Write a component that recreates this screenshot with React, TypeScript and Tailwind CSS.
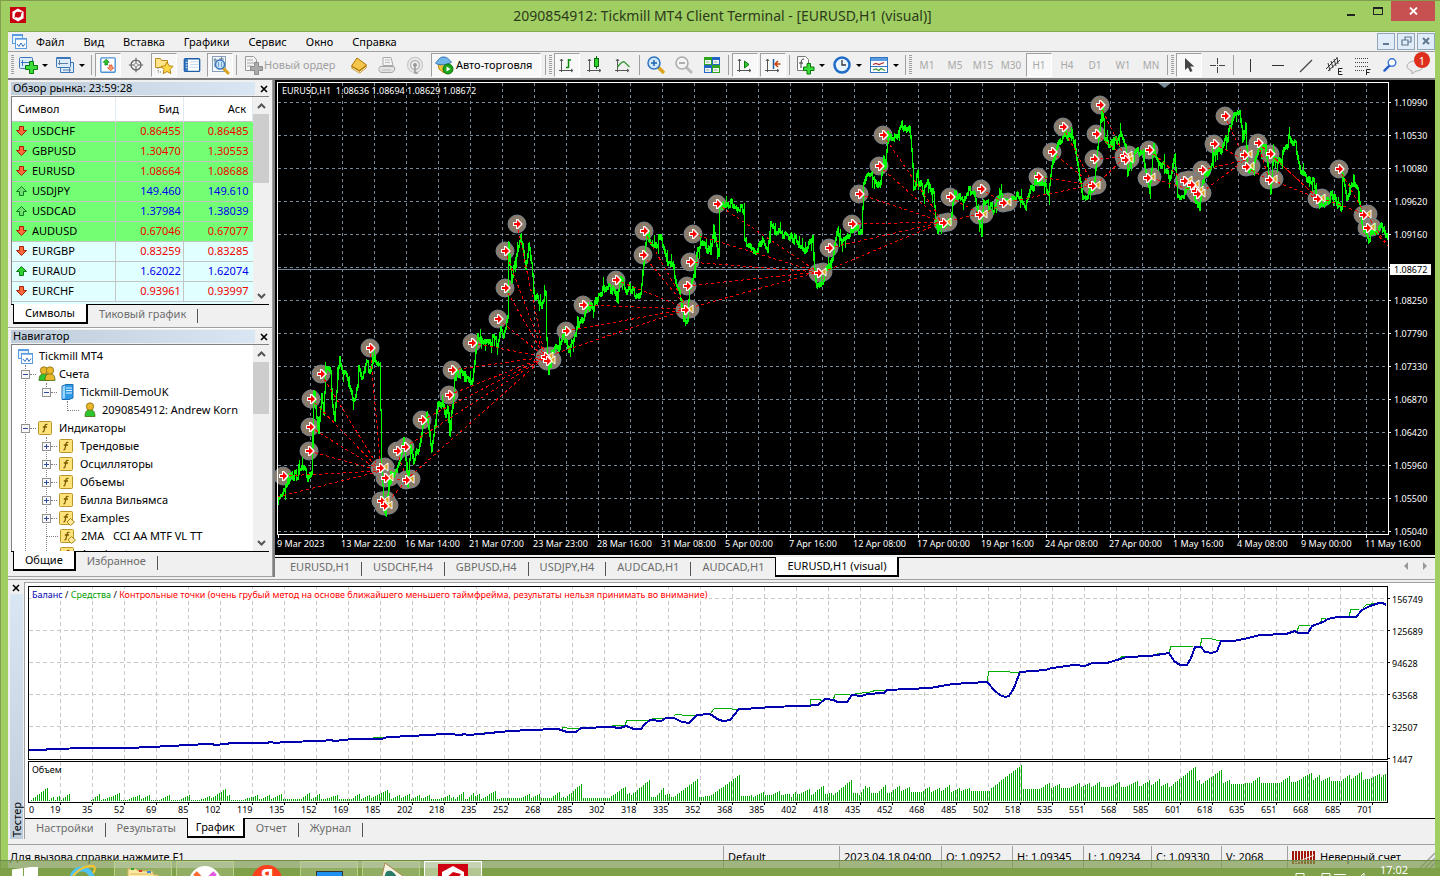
import React from "react";

type Pt = [number, number];

/* ---------- data ---------- */

const quotes: [string, string, string, boolean, boolean][] = [
  ["USDCHF", "0.86455", "0.86485", false, true],
  ["GBPUSD", "1.30470", "1.30553", false, true],
  ["EURUSD", "1.08664", "1.08688", false, true],
  ["USDJPY", "149.460", "149.610", true, true],
  ["USDCAD", "1.37984", "1.38039", true, true],
  ["AUDUSD", "0.67046", "0.67077", false, true],
  ["EURGBP", "0.83259", "0.83285", false, false],
  ["EURAUD", "1.62022", "1.62074", true, false],
  ["EURCHF", "0.93961", "0.93997", false, false],
];

const price: Pt[] = [
  [277, 499], [282, 496], [285, 484], [288, 481], [292, 474], [297, 476], [301, 466], [305, 471], [307, 478], [311, 473],
  [312, 443], [313, 396], [315, 406], [318, 433], [321, 393], [323, 413], [325, 369], [330, 371], [332, 409], [334, 421],
  [337, 376], [339, 360], [342, 371], [345, 373], [348, 386], [353, 399], [357, 386], [358, 366], [362, 379], [365, 363],
  [369, 369], [373, 356], [376, 366], [379, 366], [380, 409], [381, 469], [383, 509], [385, 514], [387, 493], [390, 473],
  [393, 479], [397, 466], [400, 459], [403, 441], [405, 459], [407, 487], [410, 446], [413, 463], [415, 451], [418, 453],
  [422, 429], [426, 416], [428, 429], [431, 447], [434, 429], [437, 406], [442, 403], [445, 413], [447, 406], [449, 434],
  [452, 403], [455, 373], [460, 374], [467, 378], [472, 383], [474, 363], [477, 333], [480, 339], [485, 343], [492, 339],
  [497, 343], [500, 326], [503, 333], [507, 319], [508, 243], [511, 283], [513, 266], [517, 249], [520, 233], [523, 253],
  [525, 266], [528, 246], [531, 259], [533, 293], [537, 296], [541, 303], [545, 294], [546, 336], [548, 373], [551, 353],
  [555, 349], [558, 349], [562, 336], [565, 339], [568, 352], [573, 336], [578, 326], [583, 316], [588, 306], [593, 309],
  [598, 293], [605, 286], [613, 289], [617, 299], [620, 274], [625, 296], [629, 288], [636, 294], [640, 293], [643, 266],
  [646, 236], [650, 246], [657, 243], [658, 235], [663, 246], [667, 263], [671, 263], [675, 279], [679, 293], [681, 309],
  [685, 321], [687, 316], [689, 289], [693, 273], [697, 249], [702, 243], [710, 255], [713, 226], [718, 252], [719, 203],
  [723, 209], [730, 204], [737, 208], [743, 209], [744, 243], [750, 243], [756, 253], [762, 239], [767, 249], [770, 224],
  [775, 233], [788, 234], [797, 243], [805, 249], [812, 236], [814, 269], [816, 288], [822, 281], [827, 266], [832, 256],
  [837, 229], [842, 243], [848, 233], [853, 226], [861, 231], [863, 183], [867, 176], [873, 176], [879, 186], [883, 156],
  [885, 166], [887, 129], [891, 139], [897, 139], [901, 123], [906, 131], [909, 126], [912, 166], [913, 189], [917, 176],
  [923, 192], [928, 183], [933, 193], [935, 219], [937, 234], [940, 226], [945, 229], [950, 219], [954, 193], [960, 199],
  [967, 193], [973, 191], [978, 216], [981, 225], [983, 203], [993, 208], [1000, 196], [1006, 203], [1010, 199], [1018, 196],
  [1025, 209], [1030, 189], [1038, 179], [1042, 183], [1048, 192], [1051, 163], [1057, 146], [1065, 133], [1072, 139],
  [1077, 163], [1081, 193], [1086, 196], [1093, 189], [1097, 149], [1102, 109], [1104, 139], [1108, 148], [1115, 141],
  [1120, 131], [1125, 143], [1127, 171], [1132, 159], [1137, 151], [1143, 156], [1147, 183], [1149, 192], [1153, 146],
  [1156, 159], [1163, 168], [1170, 176], [1174, 156], [1177, 193], [1183, 196], [1190, 183], [1195, 199], [1199, 211],
  [1202, 179], [1207, 173], [1213, 156], [1222, 146], [1227, 136], [1233, 116], [1239, 113], [1243, 139], [1245, 126],
  [1247, 169], [1252, 166], [1258, 149], [1264, 143], [1270, 189], [1273, 156], [1280, 161], [1288, 139], [1295, 146],
  [1300, 169], [1307, 179], [1313, 183], [1319, 207], [1325, 203], [1333, 193], [1338, 209], [1341, 206], [1342, 173],
  [1346, 196], [1353, 183], [1358, 193], [1361, 223], [1367, 239], [1373, 233], [1383, 226], [1387, 239],
];

const entries: Pt[] = [
  [283, 476], [309, 451], [310, 427], [311, 399], [321, 374], [370, 348], [397, 451], [405, 447], [422, 420], [449, 395],
  [452, 370], [472, 343], [498, 319], [505, 288], [505, 251], [517, 224], [566, 331], [583, 305], [616, 280], [643, 255],
  [644, 231], [687, 286], [690, 262], [693, 234], [717, 204], [829, 248], [852, 224], [859, 194], [879, 166], [883, 135],
  [950, 197], [981, 189], [1038, 177], [1052, 152], [1063, 127], [1094, 159], [1096, 134], [1100, 105], [1149, 150],
  [1202, 170], [1214, 144], [1225, 116], [1258, 143], [1270, 154], [1339, 169],
];

const exits: Pt[] = [
  [380, 468], [385, 478], [381, 501], [384, 506], [406, 480], [545, 357], [547, 361], [685, 310], [818, 273], [943, 223],
  [979, 215], [1003, 203], [1092, 186], [1124, 156], [1125, 160], [1147, 178], [1184, 181], [1191, 185], [1195, 191],
  [1197, 194], [1244, 155], [1246, 167], [1269, 180], [1317, 199], [1363, 215], [1367, 228],
];

const trades: [Pt, Pt[]][] = [
  [[381, 471], [[277, 497], [283, 476], [309, 451], [310, 427], [311, 399], [321, 374], [370, 348]]],
  [[407, 480], [[385, 478], [384, 506], [397, 451]]],
  [[545, 357], [[406, 480], [405, 447], [422, 420], [449, 395], [452, 370], [472, 343], [498, 319], [505, 288], [505, 251], [517, 224]]],
  [[688, 309], [[545, 357], [566, 331], [583, 305], [616, 280], [643, 255], [644, 231]]],
  [[818, 272], [[690, 308], [687, 286], [689, 262], [693, 234], [717, 204]]],
  [[943, 222], [[823, 272], [829, 248], [852, 224], [859, 194], [879, 166], [883, 135]]],
  [[980, 214], [[950, 197], [948, 221]]],
  [[1005, 203], [[981, 189], [983, 214]]],
  [[1093, 185], [[1008, 202], [1038, 177], [1052, 152], [1063, 127]]],
  [[1125, 157], [[1096, 134], [1100, 105], [1094, 159], [1096, 185]]],
  [[1196, 191], [[1151, 178], [1149, 150]]],
  [[1245, 160], [[1202, 192], [1202, 170], [1214, 144], [1225, 116]]],
  [[1269, 180], [[1246, 167], [1258, 143]]],
  [[1319, 199], [[1272, 180], [1270, 154], [1258, 143]]],
  [[1365, 214], [[1321, 198], [1339, 169]]],
  [[1388, 246], [[1367, 215], [1371, 228]]],
];

const balance: Pt[] = [
  [29, 750], [45, 750], [48, 749], [92, 748], [129, 748], [170, 746], [207, 744], [211, 744], [216, 745], [225, 744],
  [232, 743], [266, 743], [271, 742], [275, 743], [285, 742], [321, 741], [331, 740], [334, 741], [353, 739], [381, 739],
  [388, 737], [413, 736], [425, 735], [448, 734], [461, 735], [464, 734], [468, 735], [491, 733], [498, 732], [528, 730],
  [558, 729], [567, 732], [576, 732], [581, 728], [611, 727], [620, 728], [626, 726], [634, 729], [641, 729], [645, 724],
  [650, 720], [661, 721], [666, 718], [674, 718], [682, 722], [689, 723], [697, 715], [710, 714], [719, 720], [724, 721],
  [730, 720], [739, 709], [764, 708], [766, 707], [804, 706], [818, 705], [825, 699], [834, 700], [837, 702], [847, 702],
  [852, 695], [862, 696], [867, 694], [884, 693], [887, 690], [930, 688], [953, 684], [987, 682], [995, 691], [1000, 695],
  [1005, 697], [1009, 696], [1014, 688], [1020, 672], [1045, 670], [1052, 668], [1074, 665], [1085, 666], [1092, 663],
  [1107, 663], [1120, 659], [1127, 657], [1150, 656], [1169, 653], [1174, 661], [1180, 665], [1187, 665], [1191, 658],
  [1195, 647], [1201, 647], [1205, 652], [1212, 653], [1217, 651], [1221, 641], [1234, 641], [1248, 638], [1260, 635],
  [1286, 634], [1295, 631], [1298, 633], [1308, 633], [1312, 626], [1323, 622], [1328, 619], [1337, 617], [1356, 617],
  [1362, 610], [1370, 606], [1379, 603], [1383, 603], [1386, 605],
];

const equity: Pt[][] = [
  [[34, 749], [48, 749]],
  [[373, 738], [376, 737], [388, 737]],
  [[484, 732], [491, 732]],
  [[562, 729], [563, 727], [567, 728], [580, 728]],
  [[612, 726], [625, 725], [627, 720], [648, 720]],
  [[652, 719], [658, 718], [665, 718]],
  [[674, 716], [676, 714], [682, 715], [696, 715]],
  [[711, 713], [714, 709], [728, 708], [732, 709], [739, 709]],
  [[810, 705], [811, 699], [819, 699], [822, 701]],
  [[833, 700], [835, 695], [848, 694], [852, 696]],
  [[855, 694], [870, 692], [877, 690], [886, 690]],
  [[987, 682], [989, 671], [1009, 671], [1010, 672], [1019, 672]],
  [[1117, 660], [1123, 656], [1129, 656]],
  [[1157, 654], [1167, 653]],
  [[1169, 653], [1171, 646], [1193, 647]],
  [[1200, 647], [1202, 638], [1212, 639], [1220, 641]],
  [[1256, 636], [1260, 635]],
  [[1297, 631], [1299, 626], [1310, 625]],
  [[1320, 624], [1322, 618], [1326, 619]],
  [[1349, 616], [1351, 609], [1359, 609]],
  [[1363, 608], [1366, 605], [1376, 603]],
];

const volumeBase: Pt[] = [
  [29, 0], [48, 0], [49, 1], [90, 0], [110, 1], [400, 2], [600, 3], [740, 5], [800, 7], [855, 8], [950, 9], [990, 10],
  [1022, 12], [1060, 13], [1110, 14], [1160, 15], [1225, 17], [1300, 19], [1350, 20], [1386, 24],
];

const volumeRamps: [number, number, number, number][] = [
  [31, 47, 1, 13], [50, 54, 2, 5], [105, 120, 2, 8], [128, 140, 2, 6], [210, 225, 2, 12], [245, 258, 2, 6], [270, 281, 2, 7],
  [325, 337, 2, 6], [370, 387, 2, 11], [455, 463, 2, 9], [467, 474, 2, 9], [483, 495, 3, 10], [565, 581, 3, 17],
  [610, 626, 4, 15], [630, 649, 5, 21], [655, 664, 4, 14], [675, 697, 5, 22], [710, 739, 5, 26], [752, 764, 3, 10],
  [790, 795, 3, 9], [810, 824, 5, 16], [832, 852, 5, 22], [858, 866, 4, 16], [878, 886, 9, 17], [900, 910, 9, 14],
  [990, 1021, 12, 36], [1125, 1138, 14, 21], [1168, 1196, 13, 35], [1200, 1222, 16, 32], [1294, 1312, 18, 29],
  [1350, 1362, 21, 30],
];

const dateLabels = [
  "9 Mar 2023", "13 Mar 22:00", "16 Mar 14:00", "21 Mar 07:00", "23 Mar 23:00", "28 Mar 16:00", "31 Mar 08:00",
  "5 Apr 00:00", "7 Apr 16:00", "12 Apr 08:00", "17 Apr 00:00", "19 Apr 16:00", "24 Apr 08:00", "27 Apr 00:00",
  "1 May 16:00", "4 May 08:00", "9 May 00:00", "11 May 16:00",
];

const priceLabels = [
  "1.10990", "1.10530", "1.10080", "1.09620", "1.09160", "", "1.08250", "1.07790", "1.07330", "1.06870", "1.06420",
  "1.05960", "1.05500", "1.05040",
];

const tradeLabels = [
  0, 19, 35, 52, 69, 85, 102, 119, 135, 152, 169, 185, 202, 218, 235, 252, 268, 285, 302, 318, 335, 352, 368, 385, 402,
  418, 435, 452, 468, 485, 502, 518, 535, 551, 568, 585, 601, 618, 635, 651, 668, 685, 701,
];

/* ---------- geometry helpers ---------- */

const rnd = (n: number) => {
  const v = Math.sin(n * 12.9898) * 43758.5453;
  return v - Math.floor(v);
};

const at = (pts: Pt[], x: number) => {
  for (let i = 1; i < pts.length; i++) {
    if (x <= pts[i][0]) {
      const [x0, y0] = pts[i - 1];
      const [x1, y1] = pts[i];
      return y0 + ((y1 - y0) * (x - x0)) / (x1 - x0 || 1);
    }
  }
  return pts[pts.length - 1][1];
};

const poly = (pts: Pt[]) => pts.map((p) => p.join(",")).join(" ");

const quoteAt = (x: number) => at(price, x) + rnd(Math.floor(x / 2) + 70) * 8 - 4;

const priceBars = () => {
  let d = "";
  for (let x = 278; x < 1388; x++) {
    const a = quoteAt(x - 1);
    const b = quoteAt(x);
    const spike = rnd(x + 900) > 0.86 ? 7 : 0;
    const up = 1 + rnd(x) * 2 + (rnd(x + 31) > 0.5 ? spike : 0);
    const dn = 1 + rnd(x + 500) * 2 + (rnd(x + 31) > 0.5 ? 0 : spike);
    d += `M${x + 0.5} ${Math.round(Math.min(a, b) - up)}V${Math.round(Math.max(a, b) + dn)}`;
  }
  return d;
};

const volumeBars = () => {
  let d = "";
  for (let x = 31; x <= 1386; x += 2) {
    const ramp = volumeRamps.find((r) => x >= r[0] && x <= r[1]);
    const cell = Math.floor(x / 10);
    let h = at(volumeBase, x);
    if (ramp) h = ramp[2] + ((ramp[3] - ramp[2]) * (x - ramp[0])) / (ramp[1] - ramp[0]);
    else if (x > 56 && rnd(cell) > 0.45) h += ((x % 10) / 8) * (3 + rnd(cell + 7) * 3);
    h = Math.round(h);
    if (h > 0) d += `M${x} ${801 - h}h1V801h-1z`;
  }
  return d;
};

const range = (n: number) => Array.from({ length: n }, (_, i) => i);

/* ---------- charts ---------- */

function RedArrow({ x, y }: { x: number; y: number }) {
  return (
    <g>
      <path d={`M${x - 4} ${y - 2}h3v-3h2l4.500 4.500v1l-4.500 4.500h-2v-3h-3z`} fill="#fff" />
      <path d={`M${x - 3} ${y - 1}h3v-3l4 4l-4 4v-3h-3z`} fill="#f00" />
    </g>
  );
}

function PriceChart() {
  return (
    <svg className="block h-full w-full bg-black font-['Noto_Sans',sans-serif] text-[9px]" role="img" aria-label="EURUSD,H1">
      <g transform="translate(-275 -80)">
        <g stroke="#778899" strokeDasharray="3 3" shapeRendering="crispEdges">
          {range(34).map((i) => (
            <path key={i} d={`M${310.5 + i * 32} 83V534`} />
          ))}
          {range(14).map((i) => (
            <path key={i} d={`M278 ${102.5 + i * 33}H1388`} />
          ))}
        </g>
        <path d="M278 269.5H1388" stroke="#778899" shapeRendering="crispEdges" />
        <path d="M1158 83h13l-6.500 5z" fill="#778899" />
        <g fill="#8b7b6b" stroke="#77848f" strokeWidth="1">
          {entries.map(([x, y]) => (
            <circle key={`${x}-${y}`} cx={x} cy={y} r="9" />
          ))}
          {exits.map(([x, y]) => (
            <g key={`${x}-${y}`}>
              <circle cx={x} cy={y} r="9" />
              <circle cx={x + 5} cy={y - 1} r="9" />
            </g>
          ))}
        </g>
        <path d={priceBars()} stroke="#0f0" shapeRendering="crispEdges" />
        <g stroke="#f00" strokeDasharray="3 3" shapeRendering="crispEdges">
          {trades.map(([to, from]) =>
            from.map((p) => <path key={`${p}-${to}`} d={`M${p[0]} ${p[1]}L${to[0]} ${to[1]}`} />),
          )}
        </g>
        {exits.map(([x, y]) => (
          <path key={`${x}-${y}`} d={`M${x + 8} ${y - 5}v8l-5 -4z`} fill="#daa520" stroke="#fff" />
        ))}
        {[...entries, ...exits].map(([x, y]) => (
          <RedArrow key={`${x}-${y}`} x={x} y={y} />
        ))}
        <path d="M277.5 534V82.5H1388.5V534.5H277" fill="none" stroke="#fff" shapeRendering="crispEdges" />
        <g fill="#fff">
          <text x="282" y="94" xmlSpace="preserve">EURUSD,H1  1.08636 1.08694 1.08629 1.08672</text>
          {dateLabels.map((t, i) => (
            <g key={t}>
              <path d={`M${278.5 + i * 64} 534v4`} stroke="#fff" />
              <text x={277 + i * 64} y="547">{t}</text>
            </g>
          ))}
          {priceLabels.map((t, i) => (
            <g key={i}>
              <path d={`M1388 ${102.5 + i * 33}h3`} stroke="#fff" />
              <text x="1394" y={106 + i * 33}>{t}</text>
            </g>
          ))}
        </g>
        <rect x="1390" y="264" width="41" height="11" fill="#fff" />
        <text x="1394" y="273" fill="#000">1.08672</text>
      </g>
    </svg>
  );
}

function TesterChart() {
  return (
    <svg className="block h-full w-full bg-white font-['Noto_Sans',sans-serif] text-[9px]" role="img" aria-label="Баланс / Средства">
      <g transform="translate(-25 -583)">
        <g stroke="#c8c8c8" strokeDasharray="4 3" shapeRendering="crispEdges">
          {range(42).map((i) => (
            <path key={i} d={`M${60.5 + i * 32} 587V759M${60.5 + i * 32} 762V802`} />
          ))}
          {range(5).map((i) => (
            <path key={i} d={`M29 ${598.5 + i * 32}H1387`} />
          ))}
        </g>
        <path d={volumeBars()} fill="#00aa00" shapeRendering="crispEdges" />
        {equity.map((e, i) => (
          <polyline key={i} points={poly(e)} fill="none" stroke="#00b000" shapeRendering="crispEdges" />
        ))}
        <polyline points={poly(balance)} fill="none" stroke="#0000b0" strokeWidth="2" shapeRendering="crispEdges" />
        <g fill="none" stroke="#000" shapeRendering="crispEdges">
          <path d="M28.5 586.5H1387.5V759.5H28.5zM28.5 761.5H1387.5V802.5H28.5z" />
          {range(42).map((i) => (
            <path key={i} d={`M${60.5 + i * 32} 802v3`} />
          ))}
          {range(6).map((i) => (
            <path key={i} d={`M1387 ${598.5 + i * 32}h3`} />
          ))}
        </g>
        <rect x="31" y="589" width="678" height="11" fill="#fff" />
        <text x="32" y="598" fill="#000">
          <tspan fill="#0000b0">Баланс</tspan> / <tspan fill="#00a000">Средства</tspan> /{" "}
          <tspan fill="#f00">
            Контрольные точки (очень грубый метод на основе ближайшего меньшего таймфрейма, результаты нельзя принимать во внимание)
          </tspan>
        </text>
        <text x="32" y="773">Объем</text>
        {["156749", "125689", "94628", "63568", "32507", "1447"].map((t, i) => (
          <text key={t} x="1392" y={603 + i * 32}>{t}</text>
        ))}
        {tradeLabels.map((t, i) => (
          <text key={t} x={i === 0 ? 29 : (i < 6 ? 18 : 13) + i * 32} y="813">
            {t}
          </text>
        ))}
      </g>
    </svg>
  );
}

/* ---------- icons ---------- */

function Icon({ children, size = 20 }: { children: React.ReactNode; size?: 16 | 18 | 20 }) {
  return (
    <svg width={size} height={size} viewBox="0 0 20 20" fill="none" aria-hidden="true" className="shrink-0">
      {children}
    </svg>
  );
}

const GreenPlus = () => (
  <path d="M12 8.500h3.500v3.500h3.500v3.500h-3.500v3.500h-3.500v-3.500H8.500v-3.500h3.500z" fill="#3ddc3d" stroke="#067a06" />
);
const Axes = () => <path d="M4.500 4v13M2 15.500h14M3 6l1.500-2L6 6M14 14l2 1.500l-2 1.500" stroke="#555" />;

const icons = {
  newChart: (
    <Icon>
      <rect x="1.500" y="2.500" width="13" height="11" rx="1" fill="#dcecfb" stroke="#3a76b8" />
      <path d="M4.500 5v6M3 7.500h8" stroke="#3a76b8" />
      <path d="M11.500 6.500h4v4h4v4h-4v4h-4v-4h-4v-4h4z" fill="#3ddc3d" stroke="#067a06" />
    </Icon>
  ),
  profiles: (
    <Icon>
      <path d="M5.500 7.500h13v10h-13z" fill="#dcecfb" stroke="#3a76b8" />
      <rect x="1.500" y="2.500" width="14" height="10" rx="1" fill="#dcecfb" stroke="#3a76b8" />
      <path d="M1.500 3h14" stroke="#3a76b8" strokeWidth="2" />
      <path d="M4.500 5v5M3 8.500h10M8 15h8M14.500 13v4" stroke="#5f7f9f" />
    </Icon>
  ),
  marketWatch: (
    <Icon size={18}>
      <rect x="2" y="2" width="16" height="16" rx="1" fill="#fff" stroke="#4a90d8" strokeWidth="1.500" />
      <path d="M8 3.500L11.500 7H9.500v3h-3V7h-2z" fill="#2dc52d" stroke="#0a7a0a" strokeWidth=".7" />
      <path d="M13 16.500L9.500 13h2v-3h3v3h2z" fill="#ffa070" stroke="#c53010" strokeWidth=".7" />
    </Icon>
  ),
  dataWindow: (
    <Icon size={18}>
      <circle cx="10" cy="10" r="5.500" stroke="#666" strokeWidth="1.500" />
      <path d="M10 2v16M2 10h16" stroke="#666" strokeWidth="1.300" />
      <circle cx="10" cy="10" r="2" fill="#eee" stroke="#999" />
    </Icon>
  ),
  navigator: (
    <Icon>
      <path d="M1.500 3.500h5l1 2h6v7h-12z" fill="#ffe48a" stroke="#b8902a" />
      <path d="M4 13v4h4" stroke="#777" strokeDasharray="1 1" />
      <path d="M13 7l2 3.800l4 .6l-3 3l.8 4.200L13 16.500l-3.800 2.100L10 14.400l-3-3l4-.6z" fill="#ffd84a" stroke="#b8860b" />
    </Icon>
  ),
  terminal: (
    <Icon size={18}>
      <rect x="1.500" y="3" width="17" height="14" rx="1" fill="#fff" stroke="#1f5fa8" strokeWidth="1.500" />
      <path d="M2 3.500h3.500v13H2z" fill="#2f74c0" />
      <path d="M8 6.500h9M8 9.500h9M8 12.500h9" stroke="#bcd3ea" />
      <path d="M3 7h2M3 10h2M3 13h2" stroke="#fff" />
    </Icon>
  ),
  tester: (
    <Icon>
      <rect x="2.500" y="1.500" width="13" height="15" fill="#f4f8fc" stroke="#889fb8" />
      <path d="M5 3v9M3.500 5h4M11.500 2v4M9 4h5" stroke="#668099" />
      <path d="M13 13l5 5" stroke="#d9a520" strokeWidth="3" strokeLinecap="round" />
      <circle cx="10" cy="9.500" r="4.500" fill="#bfe0fb" fillOpacity=".85" stroke="#3a76b8" strokeWidth="1.500" />
      <path d="M8.500 7v5M11.500 7v5" stroke="#6aa0d0" />
    </Icon>
  ),
  newOrder: (
    <Icon>
      <path d="M2.500 1.500h8l3 3v11h-11z" fill="#f4f4f4" stroke="#999" />
      <path d="M4 5h6M4 8h8M4 11h5" stroke="#aaa" />
      <path d="M11.500 7.500h4v4h4v4h-4v4h-4v-4h-4v-4h4z" fill="#aaa" stroke="#8c8c8c" />
    </Icon>
  ),
  metaEditor: (
    <Icon>
      <path d="M2.500 11L8 3l9.500 7v3l-7 5.500l-8-5z" fill="#b87c10" />
      <path d="M2.500 11L8 3l9.500 7l-7 5.500z" fill="#f5c64c" stroke="#b07908" />
      <path d="M3.500 13l7 4.300l6.500-5" stroke="#fff2c0" />
    </Icon>
  ),
  options: (
    <Icon>
      <path d="M6 2.500h8l2 8H6z" fill="#f4f4f4" stroke="#aaa" />
      <path d="M8 5h5M8 7.500h5" stroke="#bbb" />
      <path d="M3 11.500h14c2 4-1 6-3 6H5c-3 0-4-3-2-6z" fill="#e4e4e4" stroke="#a4a4a4" />
      <path d="M5 15h9" stroke="#bbb" />
    </Icon>
  ),
  signals: (
    <Icon>
      <circle cx="10" cy="10" r="7.500" stroke="#ccc" strokeWidth="1.500" />
      <circle cx="10" cy="10" r="4.500" stroke="#b4b4b4" strokeWidth="1.500" />
      <circle cx="10" cy="10" r="2" fill="#999" />
      <path d="M10 11v7h3" stroke="#999" strokeWidth="1.500" />
    </Icon>
  ),
  autoTrading: (
    <Icon>
      <path d="M4 8h11l1 6l-6 4l-5-4z" fill="#f5c43c" stroke="#b8860b" />
      <path d="M1.500 8c2-1 3-6 8-6s6 4 8 5c-3 3-13 4-16 1z" fill="#6fb5e8" stroke="#2f74b0" />
      <circle cx="14" cy="14" r="5" fill="#1da51d" stroke="#0a760a" />
      <path d="M12.500 11.500v5l4-2.500z" fill="#fff" />
    </Icon>
  ),
  bars: (
    <Icon>
      <Axes />
      <path d="M11.500 4v9M11.500 5h2.500M9 12.500h2.500" stroke="#0a8a0a" strokeWidth="1.500" />
    </Icon>
  ),
  candles: (
    <Icon>
      <Axes />
      <path d="M11.500 1v13" stroke="#0a6a0a" />
      <rect x="9.500" y="3.500" width="4" height="8" fill="#2fd12f" stroke="#0a6a0a" />
    </Icon>
  ),
  line: (
    <Icon>
      <Axes />
      <path d="M4.500 12c3-4 6-7 8-4l4 4" stroke="#3a9a3a" strokeWidth="1.300" />
    </Icon>
  ),
  zoomIn: (
    <Icon>
      <path d="M12 12l6 6" stroke="#d9a520" strokeWidth="3.500" />
      <circle cx="8" cy="8" r="6" fill="#cfe8fb" stroke="#2f74c0" strokeWidth="1.500" />
      <path d="M8 5v6M5 8h6" stroke="#1f64b0" strokeWidth="1.500" />
    </Icon>
  ),
  zoomOut: (
    <Icon>
      <path d="M12 12l6 6" stroke="#bbb" strokeWidth="3" />
      <circle cx="8" cy="8" r="6" fill="#f4f4f4" stroke="#aaa" strokeWidth="1.500" />
      <path d="M5 8h6" stroke="#999" strokeWidth="1.500" />
    </Icon>
  ),
  tile: (
    <Icon>
      <path d="M2 2h8v8H2zM10 10h8v8h-8z" fill="#2fa51d" />
      <path d="M10 2h8v8h-8zM2 10h8v8H2z" fill="#2463c8" />
      <path d="M3 5h6v4H3zM11 5h6v4h-6zM3 13h6v4H3zM11 13h6v4h-6z" fill="#eef6ec" />
      <path d="M4 7h3M12 7h3M4 15h3M12 15h3" stroke="#9ab" />
    </Icon>
  ),
  autoScroll: (
    <Icon>
      <Axes />
      <path d="M9.500 6v7l4.500-3.500z" fill="#2fc52f" stroke="#0a7a0a" />
    </Icon>
  ),
  chartShift: (
    <Icon>
      <Axes />
      <path d="M10.500 4v10" stroke="#1f5fa8" strokeWidth="1.500" />
      <path d="M17.500 9h-5M15 6l-3 3l3 3" stroke="#c8400a" strokeWidth="1.500" />
    </Icon>
  ),
  indicators: (
    <Icon>
      <path d="M2.500 1.500h8l3 3v11h-11z" fill="#fff" stroke="#777" />
      <path d="M9 4c-3 0-3 2-3 9M4 8h4" stroke="#333" />
      <GreenPlus />
    </Icon>
  ),
  periods: (
    <Icon>
      <circle cx="10" cy="10" r="7.500" fill="#eaf4ff" stroke="#1f6cc8" strokeWidth="2.500" />
      <path d="M10 5v5h4" stroke="#333" strokeWidth="1.300" />
    </Icon>
  ),
  templates: (
    <Icon>
      <rect x="1.500" y="2.500" width="17" height="15" fill="#fff" stroke="#2f74c0" />
      <path d="M2 3h16v3H2z" fill="#5b9be0" />
      <path d="M2 11.500h16" stroke="#2f74c0" />
      <path d="M4 9.500l3-1l3 1l5-2" stroke="#b03030" strokeWidth="1.300" />
      <path d="M4 15l3-1l3 1.500l2-2l4 2" stroke="#2f9a2f" strokeWidth="1.300" />
    </Icon>
  ),
  cursor: (
    <Icon>
      <path d="M6 3v12l3-2.500l2.200 4.500l2.300-1l-2.200-4.500h4z" fill="#444" />
    </Icon>
  ),
  cross: (
    <Icon>
      <path d="M10.500 3v6M10.500 12v6M3 10.500h6M12 10.500h6" stroke="#444" />
      <path d="M10 10h1v1h-1z" fill="#444" />
    </Icon>
  ),
  vline: <Icon><path d="M10.500 4v13" stroke="#333" /></Icon>,
  hline: <Icon><path d="M4 10.500h12" stroke="#333" /></Icon>,
  trend: <Icon><path d="M4 17L16 5" stroke="#444" strokeWidth="1.200" /></Icon>,
  channel: (
    <Icon>
      <path d="M2 14L13 3M4 16L16 5M4 8l2 8M7 6l2 7M10 4l2 7M13 2l1 7" stroke="#333" />
      <path d="M14.500 19.500v-6h4M14.500 16.500h3M14.500 19.500h4" stroke="#222" />
    </Icon>
  ),
  fibo: (
    <Icon>
      <path d="M3 3.500h14M3 7.500h14M3 11.500h14M3 15.500h9" stroke="#444" strokeDasharray="1 1" />
      <path d="M14.500 20v-5.500h4M14.500 17.500h3" stroke="#222" />
    </Icon>
  ),
  search: (
    <Icon size={16}>
      <path d="M9 11l-6 6" stroke="#2a5fc8" strokeWidth="3" strokeLinecap="round" />
      <circle cx="12.500" cy="7" r="4.700" fill="#fff" stroke="#3a76d8" strokeWidth="1.800" />
    </Icon>
  ),
};

function AppLogo() {
  return (
    <svg width="16" height="16" viewBox="0 0 16 16" aria-hidden="true">
      <rect width="16" height="16" fill="#c8000f" />
      <path d="M8 1.500l5.600 3.200v6.600L8 14.500l-5.600-3.200V4.700z" fill="#fff" />
      <path d="M4 11l2-1c3 2 6-1 5-3l1.500-2.500l-2 .8C7 3.500 4 6 5 9z" fill="#c8000f" />
    </svg>
  );
}

function ChartLogo() {
  return (
    <svg width="15" height="15" viewBox="0 0 15 15" fill="none" aria-hidden="true" className="shrink-0">
      <rect x=".5" y=".5" width="10" height="9" fill="#e6f1fc" stroke="#5b9be0" />
      <path d="M1 1.500h9" stroke="#5b9be0" />
      <rect x="3.500" y="4.500" width="11" height="10" fill="#fff" stroke="#5b9be0" />
      <path d="M4 5.500h10" stroke="#8dbbe8" />
      <path d="M5 10l2 2.500l2-3.500l2 3.500l2-3" stroke="#2f74c0" />
    </svg>
  );
}

const QuoteArrow = ({ up, bright }: { up: boolean; bright: boolean }) => (
  <svg width="11" height="10" viewBox="0 0 11 10" aria-hidden="true" className="shrink-0">
    {up ? (
      <path d="M5.500 .5l5 5H7.500v4h-4v-4H.5z" fill={bright ? "#2fd12f" : "#6fe06f"} stroke="#0f7a1f" />
    ) : (
      <path d="M5.500 9.500l5-5H7.500v-4h-4v4H.5z" fill="#ff6a3a" stroke="#a82408" />
    )}
  </svg>
);

const FolderF = ({ custom }: { custom?: boolean }) => (
  <svg width="17" height="15" viewBox="0 0 17 15" aria-hidden="true" className="shrink-0">
    <rect x=".5" y=".5" width="13" height="13" rx="1" fill="#ffe27a" stroke="#b8962a" />
    <path d="M9.500 3.500c-2.500-.8-2.500 1-3 4s-1 3.500-2 3.200M4.800 6h4.200" fill="none" stroke="#7a5a00" strokeWidth="1.300" />
    {custom && <path d="M11.500 7.500l4 3.500l-4 3.500l-3.500-3.500z" fill="#ffe89a" stroke="#a8861a" />}
  </svg>
);

const Person = ({ body = "#2dc52d", x = 0 }: { body?: string; x?: number }) => (
  <g transform={`translate(${x} 0)`}>
    <path d="M1 14.500c0-5 2-7 5-7s5 2 5 7z" fill={body} stroke="#4a6a10" strokeWidth=".8" />
    <circle cx="6" cy="4.500" r="3.700" fill="#e8b82a" stroke="#8a6a10" strokeWidth=".8" />
  </g>
);

/* ---------- toolbar pieces ---------- */

const Grip = () => (
  <span aria-hidden="true" className="mx-px h-5 w-[3px] shrink-0 bg-[repeating-linear-gradient(#a0a0a0_0_1px,#f0f0f0_1px_2px)]" />
);
const Sep = () => <span aria-hidden="true" className="mx-0.5 h-5 w-px shrink-0 bg-[#a0a0a0]" />;

const pressedCls = "border border-[#a0a0a0] border-r-white border-b-white bg-[#f8f8f8]";

function Tool({ label, icon, on }: { label: string; icon: React.ReactNode; on?: boolean }) {
  return (
    <button type="button" aria-label={label} aria-pressed={!!on} className="flex h-6 w-7 shrink-0 items-center justify-center">
      <span className={`flex h-6 w-[26px] items-center justify-center ${on ? pressedCls : ""}`}>{icon}</span>
    </button>
  );
}

function DropTool({ label, icon }: { label: string; icon: React.ReactNode }) {
  return (
    <button type="button" aria-label={label} className="flex h-6 w-[37px] shrink-0 items-center gap-1 pl-[3px]">
      {icon}
      <span className="border-x-[3px] border-t-[3px] border-x-transparent border-t-black" />
    </button>
  );
}

function Toolbar() {
  return (
    <div className="flex h-[29px] shrink-0 items-center border-t border-[#a0a0a0] border-b-2 border-b-[#808080] bg-[#f0f0f0] pl-0.5">
      <Grip />
      <DropTool label="Новый график" icon={icons.newChart} />
      <DropTool label="Профили" icon={icons.profiles} />
      <Sep />
      <Tool label="Обзор рынка" icon={icons.marketWatch} on />
      <Tool label="Окно данных" icon={icons.dataWindow} />
      <Tool label="Навигатор" icon={icons.navigator} on />
      <Tool label="Терминал" icon={icons.terminal} />
      <Tool label="Тестер стратегий" icon={icons.tester} on />
      <Sep />
      <button type="button" disabled className="flex h-6 w-[106px] shrink-0 items-center gap-px whitespace-nowrap pl-1 text-[#a0a0a0]">
        {icons.newOrder}
        Новый ордер
      </button>
      <Tool label="MetaEditor" icon={icons.metaEditor} />
      <Tool label="Настройки" icon={icons.options} />
      <Tool label="Сигналы" icon={icons.signals} />
      <button type="button" aria-pressed="true" className={`mx-0.5 flex h-6 w-[110px] shrink-0 items-center gap-0.5 whitespace-nowrap pl-0.5 ${pressedCls}`}>
        {icons.autoTrading}
        Авто-торговля
      </button>
      <Sep />
      <Grip />
      <Tool label="Бары" icon={icons.bars} on />
      <Tool label="Японские свечи" icon={icons.candles} />
      <Tool label="Линия" icon={icons.line} />
      <Sep />
      <Tool label="Увеличить" icon={icons.zoomIn} />
      <Tool label="Уменьшить" icon={icons.zoomOut} />
      <Tool label="Расположить окна" icon={icons.tile} />
      <Sep />
      <Tool label="Автопрокрутка" icon={icons.autoScroll} on />
      <Tool label="Сдвиг графика" icon={icons.chartShift} on />
      <Sep />
      <DropTool label="Индикаторы" icon={icons.indicators} />
      <DropTool label="Периоды" icon={icons.periods} />
      <DropTool label="Шаблоны" icon={icons.templates} />
      <Sep />
      <Grip />
      {["M1", "M5", "M15", "M30", "H1", "H4", "D1", "W1", "MN"].map((t) => (
        <button key={t} type="button" className="flex h-6 w-7 shrink-0 items-center justify-center text-[10px] text-[#a8a8a8]">
          <span className={`flex h-6 w-[26px] items-center justify-center ${t === "H1" ? pressedCls : ""}`}>{t}</span>
        </button>
      ))}
      <Sep />
      <Grip />
      <Tool label="Курсор" icon={icons.cursor} on />
      <Tool label="Перекрестие" icon={icons.cross} />
      <Sep />
      <Tool label="Вертикальная линия" icon={icons.vline} />
      <Tool label="Горизонтальная линия" icon={icons.hline} />
      <Tool label="Трендовая линия" icon={icons.trend} />
      <Tool label="Канал" icon={icons.channel} />
      <Tool label="Фибоначчи" icon={icons.fibo} />
      <Tool label="Поиск" icon={icons.search} />
      <button type="button" aria-label="Уведомления: 1" className="relative ml-0.5 flex h-6 w-7 shrink-0 items-center">
        <svg width="18" height="18" viewBox="0 0 18 18" aria-hidden="true">
          <path d="M9 5c5 0 8 2 8 5s-3 5-7 5l-4 3v-3c-3-1-5-3-5-5s3-5 8-5z" fill="#eee" stroke="#aaa" />
        </svg>
        <span className="absolute -top-px left-2 flex size-4 items-center justify-center rounded-full bg-[#dd2f1b] text-[11px] leading-none text-white">1</span>
      </button>
    </div>
  );
}

/* ---------- docked panels ---------- */

function CloseMark() {
  return (
    <svg width="8" height="8" viewBox="0 0 8 8" aria-hidden="true">
      <path d="M1 1l6 6M7 1L1 7" stroke="#000" strokeWidth="1.600" />
    </svg>
  );
}

function PanelTitle({ children }: { children: React.ReactNode }) {
  return (
    <div className="flex h-[13px] items-center gap-1">
      <h2 className="h-[13px] flex-1 bg-linear-to-r from-[#bfcddb] to-[#d9e6f3] pl-0.5 text-[11px] leading-[12px]">{children}</h2>
      <button type="button" aria-label="Закрыть" className="flex w-2.5 justify-center">
        <CloseMark />
      </button>
    </div>
  );
}

const Chevron = ({ down }: { down?: boolean }) => (
  <svg width="9" height="6" viewBox="0 0 9 6" fill="none" aria-hidden="true">
    <path d={down ? "M1 1l3.500 3.500L8 1" : "M1 5l3.500-3.500L8 5"} stroke="#555" strokeWidth="2" />
  </svg>
);

function ScrollBar({ rows }: { rows: string }) {
  return (
    <div aria-hidden="true" className="flex w-4 shrink-0 flex-col items-center bg-[#f0f0f0]">
      <div className="flex h-[17px] items-center"><Chevron /></div>
      <div className={`grid w-full flex-1 ${rows}`}>
        <div className="bg-[#cdcdcd]" />
      </div>
      <div className="flex h-[17px] items-center"><Chevron down /></div>
    </div>
  );
}

const activeTab = "-mt-px h-5 border border-t-0 border-black border-r-2 border-b-2 bg-white leading-[18px] text-black";
const TabRule = () => <span aria-hidden="true" className="mt-1 h-3.5 w-px bg-[#555]" />;

function PanelTabs({ active, idle }: { active: string; idle: string }) {
  return (
    <div className="flex h-5 shrink-0 items-start border-t border-black">
      <button type="button" className={`ml-0.5 px-[11px] ${activeTab}`}>{active}</button>
      <button type="button" className="h-[18px] px-[11px] leading-[18px] text-[#6d6d6d]">{idle}</button>
      <TabRule />
    </div>
  );
}

function MarketWatch() {
  return (
    <section className="px-[3px] pt-0.5 pb-1">
      <PanelTitle>Обзор рынка: 23:59:28</PanelTitle>
      <div className="mt-px flex h-[208px] overflow-hidden border-t border-l border-[#808080] bg-white">
        <table className="flex-1 table-fixed border-collapse self-start">
          <colgroup>
            <col className="w-[103px]" />
            <col className="w-[68px]" />
            <col className="w-[69px]" />
          </colgroup>
          <thead>
            <tr className="h-6">
              <th className="border-r border-[#e0e8f0] pl-1.5 text-left font-normal">Символ</th>
              <th className="border-r border-[#e0e8f0] pr-1 text-right font-normal">Бид</th>
              <th className="border-r border-[#e0e8f0] pr-1.5 text-right font-normal">Аск</th>
            </tr>
          </thead>
          <tbody>
            {quotes.map(([s, b, a, up, hot]) => (
              <tr key={s} className={`h-5 border-t border-[#c4c4c4] ${hot ? "bg-[#73ff73]" : "bg-[#e0ffff]"}`}>
                <td className="border-r border-[#c4c4c4] p-0 pl-1">
                  <span className="flex items-center gap-[5px] leading-[18px]">
                    <QuoteArrow up={up} bright={!hot} />
                    {s}
                  </span>
                </td>
                <td className={`border-r border-[#c4c4c4] p-0 pr-0.5 text-right leading-[18px] ${up ? "text-[#0000f0]" : "text-[#f00000]"}`}>{b}</td>
                <td className={`p-0 pr-1 text-right leading-[18px] ${up ? "text-[#0000f0]" : "text-[#f00000]"}`}>{a}</td>
              </tr>
            ))}
            <tr className="h-5 border-t border-[#c4c4c4] bg-[#e0ffff]">
              <td colSpan={3} />
            </tr>
          </tbody>
        </table>
        <ScrollBar rows="grid-rows-[2fr_3fr]" />
      </div>
      <PanelTabs active="Символы" idle="Тиковый график" />
    </section>
  );
}

const Dots = () => <span aria-hidden="true" className="w-1.5 shrink-0 border-t border-dotted border-[#808080]" />;
const Toggle = ({ open }: { open?: boolean }) => (
  <svg width="9" height="9" viewBox="0 0 9 9" aria-hidden="true" className="relative shrink-0">
    <rect x=".5" y=".5" width="8" height="8" fill="#f8f8f8" stroke="#919191" />
    <path d={open ? "M2 4.500h5" : "M2 4.500h5M4.500 2v5"} stroke="#2b4f9e" />
  </svg>
);

function Branch({ label, open, depth, icon, leaf }: { label: string; open?: boolean; depth: 1 | 2 | 3; icon: React.ReactNode; leaf?: boolean }) {
  const indent = depth === 1 ? "pl-[9px]" : depth === 2 ? "pl-[30px]" : "pl-[55px]";
  return (
    <li className={`flex h-[18px] items-center whitespace-nowrap ${indent}`}>
      {leaf ? (
        <span aria-hidden="true" className={`w-3 shrink-0 border-t border-dotted border-[#808080] ${depth === 3 ? "" : "ml-1"}`} />
      ) : (
        <>
          <Toggle open={open} />
          <Dots />
        </>
      )}
      <span className="ml-px flex w-[19px] shrink-0 justify-center">{icon}</span>
      <span className="ml-[3px] whitespace-pre">{label}</span>
    </li>
  );
}

function Navigator() {
  return (
    <section className="flex min-h-0 flex-1 flex-col border-t border-white px-[3px] pt-px pb-[5px] shadow-[0_-1px_#a0a0a0]">
      <PanelTitle>Навигатор</PanelTitle>
      <div className="mt-px flex min-h-0 flex-1 overflow-hidden border-t border-l border-[#808080] bg-white">
        <ul className="relative min-w-0 flex-1 overflow-hidden pt-0.5">
          <span aria-hidden="true" className="absolute top-5 bottom-0 left-[13px] border-l border-dotted border-[#808080]" />
          <span aria-hidden="true" className="absolute top-[38px] left-[34px] h-2 border-l border-dotted border-[#808080]" />
          <span aria-hidden="true" className="absolute top-[56px] left-[55px] h-2 border-l border-dotted border-[#808080]" />
          <span aria-hidden="true" className="absolute top-[92px] bottom-0 left-[34px] border-l border-dotted border-[#808080]" />
          <li className="flex h-[18px] items-center gap-1.5 pl-1.5">
            <ChartLogo />
            Tickmill MT4
          </li>
          <Branch label="Счета" open depth={1} icon={<svg width="18" height="16" viewBox="0 0 18 16" aria-hidden="true"><Person /><Person body="#e8b82a" x={6} /></svg>} />
          <Branch
            label="Tickmill-DemoUK"
            open
            depth={2}
            icon={
              <svg width="13" height="16" viewBox="0 0 13 16" aria-hidden="true">
                <path d="M1 2l4-1.500h7V14l-4 1.500H1z" fill="#2f9be8" stroke="#1a6ab0" />
                <path d="M5 4h6M5 6.500h6M5 9h6" stroke="#e0f2ff" />
                <path d="M1.500 2.500l2.500-1V14l-2.500 1z" fill="#9ad4ff" />
              </svg>
            }
          />
          <Branch label="2090854912: Andrew Korn" leaf depth={3} icon={<svg width="12" height="16" viewBox="0 0 12 16" aria-hidden="true"><Person /></svg>} />
          <Branch label="Индикаторы" open depth={1} icon={<FolderF />} />
          <Branch label="Трендовые" depth={2} icon={<FolderF />} />
          <Branch label="Осцилляторы" depth={2} icon={<FolderF />} />
          <Branch label="Объемы" depth={2} icon={<FolderF />} />
          <Branch label="Билла Вильямса" depth={2} icon={<FolderF />} />
          <Branch label="Examples" depth={2} icon={<FolderF custom />} />
          <Branch label="2MA   CCI AA MTF VL TT" leaf depth={2} icon={<FolderF custom />} />
          <Branch label="Accelerator" leaf depth={2} icon={<FolderF custom />} />
        </ul>
        <ScrollBar rows="grid-rows-[3fr_7fr]" />
      </div>
      <PanelTabs active="Общие" idle="Избранное" />
    </section>
  );
}

function ChartTabs() {
  return (
    <div className="mt-0.5 flex h-5 shrink-0 items-start border-t border-black pl-1 text-[#6d6d6d]">
      {["EURUSD,H1", "USDCHF,H4", "GBPUSD,H4", "USDJPY,H4", "AUDCAD,H1", "AUDCAD,H1"].map((t, i) => (
        <React.Fragment key={i}>
          {i > 0 && <TabRule />}
          <button type="button" className="h-[18px] px-[11px] leading-[18px]">{t}</button>
        </React.Fragment>
      ))}
      <button type="button" className={`px-[11px] ${activeTab}`}>EURUSD,H1 (visual)</button>
      <div className="ml-auto flex gap-[15px] pt-1 pr-2">
        <button type="button" aria-label="Влево" className="border-y-4 border-r-4 border-y-transparent border-r-[#999]" />
        <button type="button" aria-label="Вправо" className="border-y-4 border-l-4 border-y-transparent border-l-[#999]" />
      </div>
    </div>
  );
}

function Tester() {
  const idle = "h-[18px] px-[11px] leading-[18px]";
  return (
    <section className="flex h-[265px] shrink-0 border-t border-[#a0a0a0] bg-[#f0f0f0] pt-0.5 pb-[5px]">
      <div className="flex w-4 shrink-0 flex-col items-center">
        <button type="button" aria-label="Закрыть" className="flex h-3 items-center"><CloseMark /></button>
        <div className="flex w-[13px] flex-1 items-end justify-center bg-linear-to-b from-[#d9e6f3] to-[#bfcddb] pb-0.5">
          <h2 className="rotate-180 text-[11px] leading-[13px] [writing-mode:vertical-rl]">Тестер</h2>
        </div>
      </div>
      <div className="flex min-w-0 flex-1 flex-col border-t border-l border-[#a0a0a0]">
        <div className="min-h-0 flex-1"><TesterChart /></div>
        <div className="flex h-[21px] items-start border-t border-black text-[#6d6d6d]">
          <button type="button" className={idle}>Настройки</button>
          <TabRule />
          <button type="button" className={idle}>Результаты</button>
          <button type="button" className={`px-2 ${activeTab}`}>График</button>
          <button type="button" className={idle}>Отчет</button>
          <TabRule />
          <button type="button" className={idle}>Журнал</button>
          <TabRule />
        </div>
      </div>
    </section>
  );
}

function StatusBar() {
  const cell = "flex h-[22px] items-center border-l border-[#a0a0a0] pl-1 whitespace-nowrap";
  return (
    <footer className="flex h-[32px] shrink-0 items-start border-t border-[#a0a0a0] bg-[#f0f0f0] pt-px">
      <span className="flex h-[22px] flex-1 items-center pl-0.5">Для вызова справки нажмите F1</span>
      <span className={`${cell} w-[116px]`}>Default</span>
      <span className={`${cell} w-[102px]`}>2023.04.18 04:00</span>
      <span className={`${cell} w-[71px]`}>O: 1.09252</span>
      <span className={`${cell} w-[71px]`}>H: 1.09345</span>
      <span className={`${cell} w-[68px]`}>L: 1.09234</span>
      <span className={`${cell} w-[70px]`}>C: 1.09330</span>
      <span className={`${cell} w-[66px]`}>V: 2068</span>
      <span className={`${cell} w-[148px] gap-1`}>
        <svg width="24" height="13" viewBox="0 0 24 13" aria-hidden="true">
          {range(8).map((i) => (
            <path key={i} d={`M${i * 3 + 1} 0v13`} stroke="#a01808" strokeWidth="2" />
          ))}
          <path d="M3 12L22 4" stroke="#f0f0f0" />
        </svg>
        Неверный счет
        <svg width="16" height="18" viewBox="0 0 16 18" aria-hidden="true" className="ml-auto self-end">
          <path d="M1 18L16 3M6 18L16 8M11 18l5-5" stroke="#a0a0a0" strokeWidth="1.500" />
        </svg>
      </span>
    </footer>
  );
}

function Taskbar() {
  const box = "flex h-full w-[58px] justify-center overflow-hidden border border-b-0 border-[#b8d08a] bg-white/15 pt-1";
  return (
    <nav aria-label="Панель задач" className="absolute inset-x-0 bottom-0 mr-1 flex h-4 items-start gap-1 overflow-hidden border-t border-[#6f8c48] bg-linear-to-b from-[#7c9a50b0] from-45% to-[#7ea048] to-50%">
      <button type="button" aria-label="Пуск" className="w-[50px] pt-1.5">
        <svg width="28" height="24" viewBox="0 0 28 24" aria-hidden="true" className="ml-3">
          <path d="M0 2.500L11 1v11H0zM12 1L26-1v13H12z" fill="#fff" />
        </svg>
      </button>
      <button type="button" aria-label="Internet Explorer" className="flex w-[56px] justify-center pt-1">
        <svg width="28" height="28" viewBox="0 0 28 28" fill="none" aria-hidden="true">
          <circle cx="14" cy="14" r="10" stroke="#4fc3f2" strokeWidth="5" />
          <path d="M3 22C-1 14 12 0 25 1c3 1 2 5 0 7" stroke="#f6c52e" strokeWidth="2" />
        </svg>
      </button>
      <button type="button" aria-label="Проводник" className={box}>
        <svg width="34" height="28" viewBox="0 0 34 28" aria-hidden="true">
          <path d="M2 3h8l2 2h14l2 4h4v18H2z" fill="#fbe8a4" stroke="#d8b85a" />
          <path d="M5 3h3" stroke="#2aa52a" strokeWidth="2" />
          <path d="M13 5h3" stroke="#d83a2a" strokeWidth="2" />
          <path d="M21 6h4" stroke="#3a8ad8" strokeWidth="2" />
          <path d="M4 8h24" stroke="#d8b85a" />
        </svg>
      </button>
      <button type="button" aria-label="Xodo" className={box}>
        <svg width="32" height="32" viewBox="0 0 32 32" aria-hidden="true" className="shrink-0">
          <circle cx="16" cy="16" r="16" fill="#fff" />
          <path d="M6 7l10 10" stroke="#ff6a2a" strokeWidth="5" />
          <path d="M26 7L16 17" stroke="#e05ae0" strokeWidth="5" />
        </svg>
      </button>
      <button type="button" aria-label="Яндекс" className="flex w-[58px] justify-center pt-1">
        <span className="flex size-[30px] shrink-0 justify-center rounded-full bg-[#fc3f1d] text-[20px] leading-[22px] font-bold text-white">Я</span>
      </button>
      <button type="button" aria-label="Рабочий стол" className={box}>
        <span className="mt-[5px] h-5 w-[27px] border border-[#333] bg-[#1e90f0]" />
      </button>
      <button type="button" aria-label="Изображения" className={box}>
        <svg width="28" height="26" viewBox="0 0 28 26" aria-hidden="true" className="-mt-1 shrink-0">
          <path d="M8 1l18 13l-6 12H2z" fill="#f8f4e4" stroke="#a8844a" />
          <path d="M9 10c4-3 9 0 11 6H7z" fill="#2a7a6a" />
        </svg>
      </button>
      <button type="button" aria-label="Tickmill MT4" className="flex h-full w-[58px] justify-center overflow-hidden border border-b-0 border-white bg-white/40 pt-0.5">
        <svg width="30" height="30" viewBox="0 0 30 30" aria-hidden="true" className="shrink-0">
          <rect width="30" height="30" fill="#d00010" />
          <path d="M15 2l11 6v13l-11 7L4 21V8z" fill="#fff" />
          <path d="M8 14l7-6l8 2l-7 9z" fill="#d00010" />
        </svg>
      </button>
      <div className="ml-auto flex items-start gap-2.5 pr-8 text-white">
        <svg width="80" height="12" viewBox="0 0 80 12" fill="none" aria-hidden="true" className="mt-1">
          <path d="M6 12V8.500h8V12M32 12v-3.500h8v3.500M44 9.500h12M70 12l4-4v4" stroke="#fff" />
        </svg>
        <time className="mt-[3px] text-[11px] leading-3">17:02</time>
      </div>
    </nav>
  );
}

export default function App() {
  return (
    <div className="relative h-screen overflow-hidden bg-white pr-1 font-['Noto_Sans',sans-serif] text-[11px] leading-4 text-black">
      <div className="flex h-full flex-col border-t border-l border-[#7f9f4f] bg-[#a0ce63] pr-[5px] pl-[7px]">
        <header className="flex h-[30px] shrink-0 items-start">
          <span className="mt-1.5 ml-0.5 w-[98px]"><AppLogo /></span>
          <h1 className="flex-1 pt-[3px] text-center text-[14px] leading-6 text-[#2c3a1a]">
            2090854912: Tickmill MT4 Client Terminal - [EURUSD,H1 (visual)]
          </h1>
          <div className="flex w-[98px] items-start">
            <button type="button" aria-label="Свернуть" className="flex h-5 w-[27px] items-end justify-center pb-[5px]">
              <span className="h-0.5 w-2 bg-[#222]" />
            </button>
            <button type="button" aria-label="Развернуть" className="flex h-5 w-[27px] items-center justify-center">
              <span className="h-2 w-2.5 border border-t-2 border-[#222]" />
            </button>
            <button type="button" aria-label="Закрыть" className="flex h-5 w-11 items-center justify-center bg-[#c75050]">
              <svg width="9" height="8" viewBox="0 0 9 8" aria-hidden="true"><path d="M1 .5l7 7M8 .5l-7 7" stroke="#fff" strokeWidth="1.800" /></svg>
            </button>
          </div>
        </header>
        <div className="flex min-h-0 flex-1 flex-col bg-[#f0f0f0]">
          <nav className="flex h-5 shrink-0 items-center border-t border-[#87ab53] pl-1">
            <ChartLogo />
            <div className="flex gap-[19px] pl-[9px]">
              {["Файл", "Вид", "Вставка", "Графики", "Сервис", "Окно", "Справка"].map((m) => (
                <button key={m} type="button">{m}</button>
              ))}
            </div>
            <div className="ml-auto flex gap-0.5">
              {["M5 10h6", "M4 6h6v5H4zM7 6V3h6v5h-3", "M5 4l6 6M11 4l-6 6"].map((d, i) => (
                <button key={d} type="button" aria-label={["Свернуть окно", "Восстановить окно", "Закрыть окно"][i]} className="h-[17px] w-[18px] border border-[#8fa6bd] bg-[#e0edf9]">
                  <svg width="16" height="15" viewBox="0 0 16 15" fill="none" aria-hidden="true"><path d={d} stroke="#61788f" strokeWidth={i === 1 ? 1.2 : 2} /></svg>
                </button>
              ))}
            </div>
          </nav>
          <Toolbar />
          <main className="flex min-h-0 flex-1 pb-0.5">
            <aside className="flex w-[265px] shrink-0 flex-col border-r border-b border-[#a0a0a0]">
              <MarketWatch />
              <Navigator />
            </aside>
            <div className="flex min-w-0 flex-1 flex-col border-l-2 border-[#808080]">
              <div className="min-h-0 flex-1"><PriceChart /></div>
              <ChartTabs />
            </div>
          </main>
          <Tester />
          <StatusBar />
        </div>
      </div>
      <Taskbar />
    </div>
  );
}
